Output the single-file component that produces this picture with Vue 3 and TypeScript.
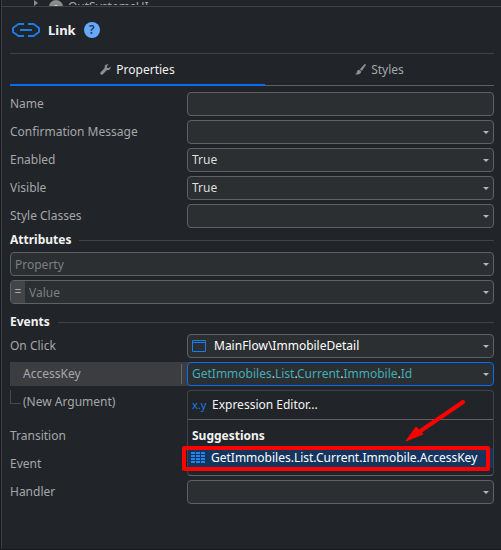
<script setup lang="ts">
import { ref } from 'vue'

interface Field {
  id: string
  label: string
  value: string
  kind: 'text' | 'select'
}

const basics = ref<Field[]>([
  { id: 'name', label: 'Name', value: '', kind: 'text' },
  { id: 'confirm', label: 'Confirmation Message', value: '', kind: 'select' },
  { id: 'enabled', label: 'Enabled', value: 'True', kind: 'select' },
  { id: 'visible', label: 'Visible', value: 'True', kind: 'select' },
  { id: 'classes', label: 'Style Classes', value: '', kind: 'select' },
])

const handlers = ref<Field[]>([
  { id: 'transition', label: 'Transition', value: '', kind: 'select' },
  { id: 'event', label: 'Event', value: '', kind: 'select' },
  { id: 'handler', label: 'Handler', value: '', kind: 'select' },
])

const expression: string[] = ['GetImmobiles', 'List', 'Current', 'Immobile', 'Id']
const property = ref('')
const attributeValue = ref('')
const destination = ref('MainFlow\\ImmobileDetail')
const tab = ref<'properties' | 'styles'>('properties')
</script>

<template>
  <main class="panel">
    <div class="tree">
      <svg class="tree-arrow" viewBox="0 0 4 6" aria-hidden="true"><path d="M0 0 4 3 0 6Z" /></svg>
      <svg class="tree-icon" viewBox="0 0 14 14" aria-hidden="true">
        <circle cx="7" cy="7" r="7" fill="#8b8b8b" />
        <circle cx="7" cy="7" r="2" fill="#d0d0d0" />
      </svg>
      <span>OutSystemsUI</span>
    </div>

    <div class="body">
      <header class="head">
        <svg class="link-icon" viewBox="0 0 28 14" aria-hidden="true">
          <path d="M12 1H6.500L1 5V9L6.500 13H12M16 1h5.500L27 5V9L21.500 13H16M8 7h12" />
        </svg>
        <h1>Link</h1>
        <button class="help" type="button" aria-label="Help">?</button>
      </header>

      <div class="tabs" role="tablist">
        <button type="button" role="tab" :class="['tab', { active: tab === 'properties' }]" :aria-selected="tab === 'properties'" @click="tab = 'properties'">
          <svg viewBox="0 0 12 12" aria-hidden="true">
            <path d="M11.500 2.800 9.500 4.500 7.700 4.200 7.400 2.500 9.200.5C7.500 0 5.500.9 5.100 2.700c-.1.600 0 1.100.1 1.600L.7 8.900C-.1 9.800.2 10.900.8 11.300c.7.600 1.600.5 2.300-.2l4.500-4.500C10 7.200 12 5.200 11.500 2.800Z" />
          </svg>
          Properties
        </button>
        <button type="button" role="tab" :class="['tab', { active: tab === 'styles' }]" :aria-selected="tab === 'styles'" @click="tab = 'styles'">
          <svg viewBox="0 0 12 12" aria-hidden="true">
            <path d="M11.500.3c.5.400.4.900.1 1.400L7.400 7.500 5.300 5.600 10.100.6C10.600.1 11 0 11.500.3ZM4.600 6.200 6.800 8.200C6.600 11 3.500 12 0 11.200 1.700 10.700 1.800 9.900 2.200 8.300 2.500 7 3.400 6.200 4.600 6.200Z" />
          </svg>
          Styles
        </button>
      </div>

      <section class="rows">
        <div v-for="f in basics" :key="f.id" class="row">
          <label :for="f.id">{{ f.label }}</label>
          <input v-if="f.kind === 'text'" :id="f.id" v-model="f.value" class="control" type="text" />
          <div v-else class="box">
            <select :id="f.id" v-model="f.value" class="control">
              <option value=""></option>
              <option value="True">True</option>
            </select>
            <svg class="caret" viewBox="0 0 6 3" aria-hidden="true"><path d="M0 0h6L3 3Z" /></svg>
          </div>
        </div>
      </section>

      <h2>Attributes</h2>
      <section class="rows">
        <div class="box">
          <input v-model="property" class="control" type="text" placeholder="Property" aria-label="Property" />
          <svg class="caret" viewBox="0 0 6 3" aria-hidden="true"><path d="M0 0h6L3 3Z" /></svg>
        </div>
        <div class="box">
          <span class="equals">=</span>
          <input v-model="attributeValue" class="control after-equals" type="text" placeholder="Value" aria-label="Value" />
          <svg class="caret" viewBox="0 0 6 3" aria-hidden="true"><path d="M0 0h6L3 3Z" /></svg>
        </div>
      </section>

      <h2 class="spaced">Events</h2>
      <section class="rows">
        <div class="row">
          <label for="click">On Click</label>
          <div class="box">
            <svg class="screen-icon" viewBox="0 0 14 12" aria-hidden="true"><path d="M.5.5h13v11H.5ZM.5 2.500h13" /></svg>
            <select id="click" v-model="destination" class="control strong after-icon">
              <option>MainFlow\ImmobileDetail</option>
            </select>
            <svg class="caret" viewBox="0 0 6 3" aria-hidden="true"><path d="M0 0h6L3 3Z" /></svg>
          </div>
        </div>

        <div class="row selected">
          <label id="access-label" class="nested" for="access">AccessKey</label>
          <div class="box">
            <button id="access" type="button" class="control focus" role="combobox" aria-haspopup="listbox" aria-expanded="true" aria-controls="access-menu" aria-labelledby="access-label access">
              <template v-for="(part, i) in expression" :key="part"><span v-if="i" class="dot">.</span>{{ part }}</template>
            </button>
            <svg class="caret" viewBox="0 0 6 3" aria-hidden="true"><path d="M0 0h6L3 3Z" /></svg>

            <div id="access-menu" class="menu">
              <button type="button" class="editor"><span class="xy">x.y</span>Expression Editor...</button>
              <div class="group">Suggestions</div>
              <button type="button" class="suggestion">
                <svg viewBox="0 0 14 12" aria-hidden="true">
                  <path d="M0 1h14M0 4h14M0 7h14M0 10h14" stroke="#1d86f0" stroke-width="2" stroke-dasharray="4 1" />
                </svg>
                GetImmobiles.List.Current.Immobile.AccessKey
              </button>
              <div class="marker"></div>
              <svg class="pointer" viewBox="0 0 62 44" aria-hidden="true">
                <path d="M58 3 14 33" stroke="#f00" stroke-width="4" stroke-linecap="round" />
                <path d="M1 42 11 28 18 35Z" fill="#f00" stroke="#f00" stroke-linejoin="round" />
              </svg>
            </div>
          </div>
        </div>

        <div class="row">
          <span class="nested branch">(New Argument)</span>
        </div>
      </section>

      <section class="rows handlers">
        <div v-for="f in handlers" :key="f.id" class="row">
          <label :for="f.id">{{ f.label }}</label>
          <div class="box">
            <select :id="f.id" v-model="f.value" class="control"><option value=""></option></select>
            <svg class="caret" viewBox="0 0 6 3" aria-hidden="true"><path d="M0 0h6L3 3Z" /></svg>
          </div>
        </div>
      </section>
    </div>
  </main>
</template>

<style>
body {
  margin: 0;
  background: #212428;
}
</style>

<style scoped>
* {
  box-sizing: border-box;
}
.panel {
  min-height: 100vh;
  border-left: 1px solid #16181b;
  border-bottom: 1px solid #15171a;
  box-shadow: inset 1px 0 #3b3e42;
  background: #212428;
  color: #a5a7aa;
  font: 12px/16px "Noto Sans", sans-serif;
}
button,
input,
select {
  margin: 0;
  font: inherit;
  color: inherit;
}
.tree {
  display: flex;
  align-items: flex-start;
  height: 7px;
  padding-left: 33px;
  border-bottom: 1px solid #3f4246;
  overflow: hidden;
}
.tree-arrow {
  width: 4px;
  height: 6px;
  margin-right: 11px;
  fill: #8b8b8b;
}
.tree-icon {
  width: 14px;
  height: 14px;
  margin-right: 5px;
}
.tree span {
  height: 5px;
  overflow: hidden;
  line-height: 14px;
}
.body {
  padding: 0 7px 0 9px;
}
.head {
  display: flex;
  align-items: center;
  height: 46px;
  padding-left: 2px;
}
.link-icon {
  width: 28px;
  height: 14px;
  margin-right: 8px;
  fill: none;
  stroke: #187fe8;
  stroke-width: 2;
  stroke-linejoin: round;
}
h1 {
  margin: 0 8px 0 0;
  color: #f2f2f2;
  font-size: 13px;
  line-height: 18px;
  font-weight: 700;
}
.help {
  width: 16px;
  height: 16px;
  padding: 0;
  border: 0;
  border-radius: 50%;
  background: #66a8fa;
  color: #23364f;
  font-weight: 600;
  line-height: 16px;
  text-align: center;
}
.tabs {
  display: grid;
  grid-template-columns: 255px 1fr;
  height: 33px;
  margin-bottom: 6px;
  border-top: 1px solid #3f4246;
}
.tab {
  display: flex;
  align-items: center;
  justify-content: center;
  gap: 5px;
  padding: 0 0 1px;
  border: 0;
  background: none;
  box-shadow: inset 0 -1px #5e6164;
}
.tab.active {
  color: #f0f0f0;
  box-shadow: inset 0 -2px #0a6cf0;
}
.tab svg {
  width: 11px;
  height: 11px;
  fill: #8d8f92;
}
.rows {
  display: flex;
  flex-direction: column;
  gap: 4px;
}
.row {
  display: grid;
  grid-template-columns: 177px 1fr;
  min-height: 24px;
}
.row > label,
.nested {
  padding: 4px 0;
  line-height: 16px;
}
.row > .nested {
  padding-left: 13px;
}
.box {
  position: relative;
}
.control {
  display: block;
  width: 100%;
  height: 24px;
  padding: 0 20px 0 4px;
  border: 1px solid #5f6265;
  border-radius: 4px;
  outline: 0;
  background: #2c2f32;
  color: #dedede;
  text-align: left;
  appearance: none;
}
.control::placeholder {
  color: #7c7f82;
  opacity: 1;
}
.strong {
  color: #fff;
}
.after-icon {
  padding-left: 26px;
}
.after-equals {
  padding-left: 18px;
}
.focus {
  border-color: #0a6cf0;
  color: #42adb5;
  white-space: nowrap;
}
.dot {
  color: #e4e4e4;
}
.caret {
  position: absolute;
  top: 11px;
  right: 5px;
  width: 6px;
  height: 3px;
  fill: #b4b6b8;
  pointer-events: none;
}
.equals {
  position: absolute;
  top: 1px;
  left: 1px;
  width: 14px;
  height: 22px;
  border-radius: 3px 0 0 3px;
  background: #424447;
  line-height: 22px;
  text-align: center;
}
.screen-icon {
  position: absolute;
  top: 6px;
  left: 5px;
  width: 14px;
  height: 12px;
  fill: none;
  stroke: #187fe8;
}
h2 {
  display: flex;
  align-items: center;
  gap: 8px;
  height: 24px;
  margin: 0;
  color: #f2f2f2;
  font-size: 12px;
  line-height: 16px;
  font-weight: 700;
}
h2::after {
  content: "";
  flex: 1;
  height: 1px;
  background: #3f4246;
}
.spaced {
  margin-top: 6px;
}
.selected {
  background: linear-gradient(#3c3d40, #3c3d40) left / 180px 100% no-repeat;
}
.selected > label {
  margin-right: 5px;
  position: relative;
}
.selected > label::after {
  content: "";
  position: absolute;
  top: 2px;
  right: 0;
  bottom: 2px;
  width: 1px;
  background: #65676a;
}
.branch {
  position: relative;
}
.branch::before {
  content: "";
  position: absolute;
  top: 0;
  left: 0;
  width: 10px;
  height: 13px;
  border: solid #45484b;
  border-width: 0 0 1px 1px;
}
.handlers {
  margin-top: 10px;
}
.menu {
  position: absolute;
  z-index: 1;
  top: 28px;
  left: 0;
  right: 0;
  height: 86px;
  border: 1px solid #404346;
  border-bottom-color: #606366;
  border-radius: 4px;
  background: #212428;
}
.menu button {
  display: flex;
  align-items: center;
  width: 100%;
  border: 0;
  color: #f4f4f4;
  text-align: left;
  white-space: nowrap;
}
.menu .editor {
  height: 29px;
  padding: 0 4px;
  border-bottom: 1px solid #5f6265;
  background: none;
}
.xy {
  width: 20px;
  color: #187fe8;
  font-size: 11px;
}
.group {
  height: 28px;
  padding: 8px 4px 4px;
  color: #f2f2f2;
  font-weight: 700;
}
.menu .suggestion {
  height: 20px;
  padding: 0 3px;
  background: #15355f;
  color: #fff;
}
.suggestion svg {
  width: 14px;
  height: 12px;
  margin-right: 6px;
}
.marker {
  position: absolute;
  top: 55px;
  left: -6px;
  right: 3px;
  height: 25px;
  border: 4px solid #f00;
  border-radius: 2px;
}
.pointer {
  position: absolute;
  top: 8px;
  right: 26px;
  width: 62px;
  height: 44px;
  fill: none;
}
</style>
